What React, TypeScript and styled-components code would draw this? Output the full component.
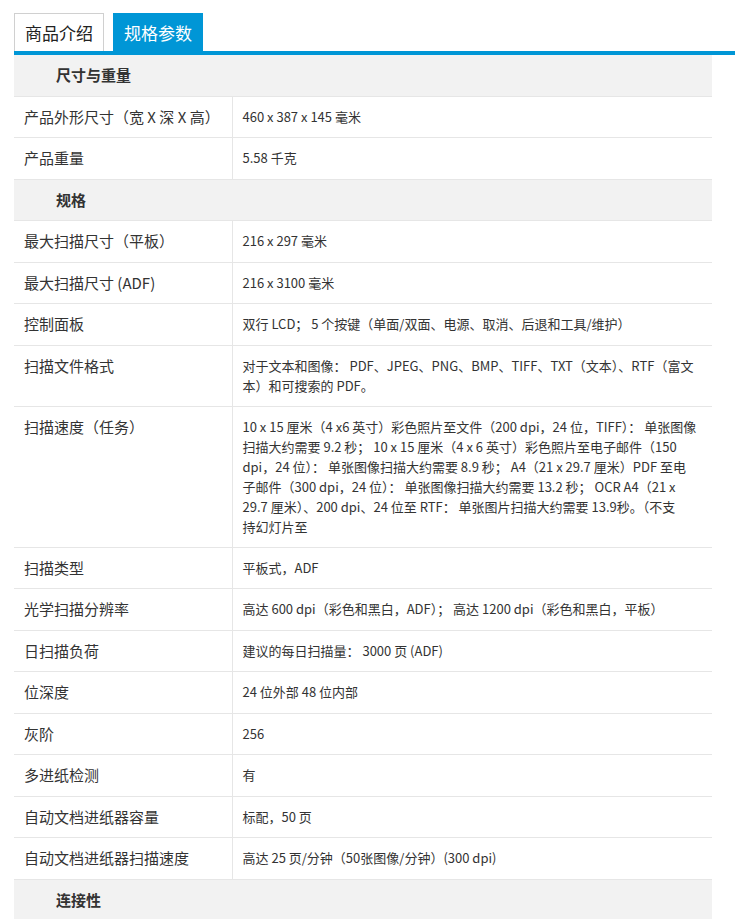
import styled, { createGlobalStyle } from "styled-components";

const GlobalStyle = createGlobalStyle`
  body {
    margin: 0;
    background: #fff;
    font-family: "Noto Sans CJK SC", "Noto Sans", sans-serif;
    color: #333;
  }
`;

const Page = styled.div`
  padding: 13px 15px 0 14px;
`;

const Tabs = styled.div`
  display: flex;
  gap: 9px;
  border-bottom: 4px solid #0096d6;
`;

const Tab = styled.div<{ $active?: boolean }>`
  height: 38px;
  padding: 0 10px;
  display: flex;
  align-items: center;
  font-size: 17px;
  box-sizing: border-box;
  border: 1px solid ${(p) => (p.$active ? "#0096d6" : "#d0d0d0")};
  border-bottom: none;
  background: ${(p) => (p.$active ? "#0096d6" : "#fff")};
  color: ${(p) => (p.$active ? "#fff" : "#222")};
`;

const Table = styled.table`
  width: 698px;
  border-collapse: collapse;
  table-layout: fixed;
`;

const LabelCol = styled.col`
  width: 218px;
`;

const GroupCell = styled.td`
  background: #f2f2f2;
  padding: 10px 10px 10px 42px;
  font-size: 15px;
  font-weight: 700;
  line-height: 20.5px;
  border-bottom: 1px solid #e6e6e6;
`;

const Label = styled.td`
  vertical-align: top;
  padding: 10px 10px;
  font-size: 15px;
  line-height: 20.5px;
  border-bottom: 1px solid #e6e6e6;
  border-right: 1px solid #e6e6e6;
`;

const Value = styled.td`
  vertical-align: top;
  padding: 10px 10px;
  font-size: 13px;
  line-height: 20px;
  border-bottom: 1px solid #e6e6e6;
`;

const Line = styled.span`
  display: block;
  white-space: nowrap;
`;

type Row = { group: string } | { label: string; value: string | string[] };

const rows: Row[] = [
  { group: "尺寸与重量" },
  { label: "产品外形尺寸（宽 X 深 X 高）", value: "460 x 387 x 145 毫米" },
  { label: "产品重量", value: "5.58 千克" },
  { group: "规格" },
  { label: "最大扫描尺寸（平板）", value: "216 x 297 毫米" },
  { label: "最大扫描尺寸 (ADF)", value: "216 x 3100 毫米" },
  { label: "控制面板", value: "双行 LCD； 5 个按键（单面/双面、电源、取消、后退和工具/维护）" },
  {
    label: "扫描文件格式",
    value: [
      "对于文本和图像： PDF、JPEG、PNG、BMP、TIFF、TXT（文本）、RTF（富文",
      "本）和可搜索的 PDF。",
    ],
  },
  {
    label: "扫描速度（任务）",
    value: [
      "10 x 15 厘米（4 x6 英寸）彩色照片至文件（200 dpi，24 位，TIFF）： 单张图像",
      "扫描大约需要 9.2 秒； 10 x 15 厘米（4 x 6 英寸）彩色照片至电子邮件（150",
      "dpi，24 位）： 单张图像扫描大约需要 8.9 秒； A4（21 x 29.7 厘米）PDF 至电",
      "子邮件（300 dpi，24 位）： 单张图像扫描大约需要 13.2 秒； OCR A4（21 x",
      "29.7 厘米）、200 dpi、24 位至 RTF： 单张图片扫描大约需要 13.9秒。（不支",
      "持幻灯片至",
    ],
  },
  { label: "扫描类型", value: "平板式，ADF" },
  { label: "光学扫描分辨率", value: "高达 600 dpi（彩色和黑白，ADF）； 高达 1200 dpi（彩色和黑白，平板）" },
  { label: "日扫描负荷", value: "建议的每日扫描量： 3000 页 (ADF)" },
  { label: "位深度", value: "24 位外部 48 位内部" },
  { label: "灰阶", value: "256" },
  { label: "多进纸检测", value: "有" },
  { label: "自动文档进纸器容量", value: "标配，50 页" },
  { label: "自动文档进纸器扫描速度", value: "高达 25 页/分钟（50张图像/分钟）(300 dpi)" },
  { group: "连接性" },
];

export default function App() {
  return (
    <Page>
      <GlobalStyle />
      <Tabs>
        <Tab>商品介绍</Tab>
        <Tab $active>规格参数</Tab>
      </Tabs>
      <Table>
        <colgroup>
          <LabelCol />
          <col />
        </colgroup>
        <tbody>
          {rows.map((r, i) =>
            "group" in r ? (
              <tr key={i}>
                <GroupCell colSpan={2}>{r.group}</GroupCell>
              </tr>
            ) : (
              <tr key={i}>
                <Label>{r.label}</Label>
                <Value>
                  {Array.isArray(r.value)
                    ? r.value.map((l, j) => <Line key={j}>{l}</Line>)
                    : r.value}
                </Value>
              </tr>
            )
          )}
        </tbody>
      </Table>
    </Page>
  );
}
